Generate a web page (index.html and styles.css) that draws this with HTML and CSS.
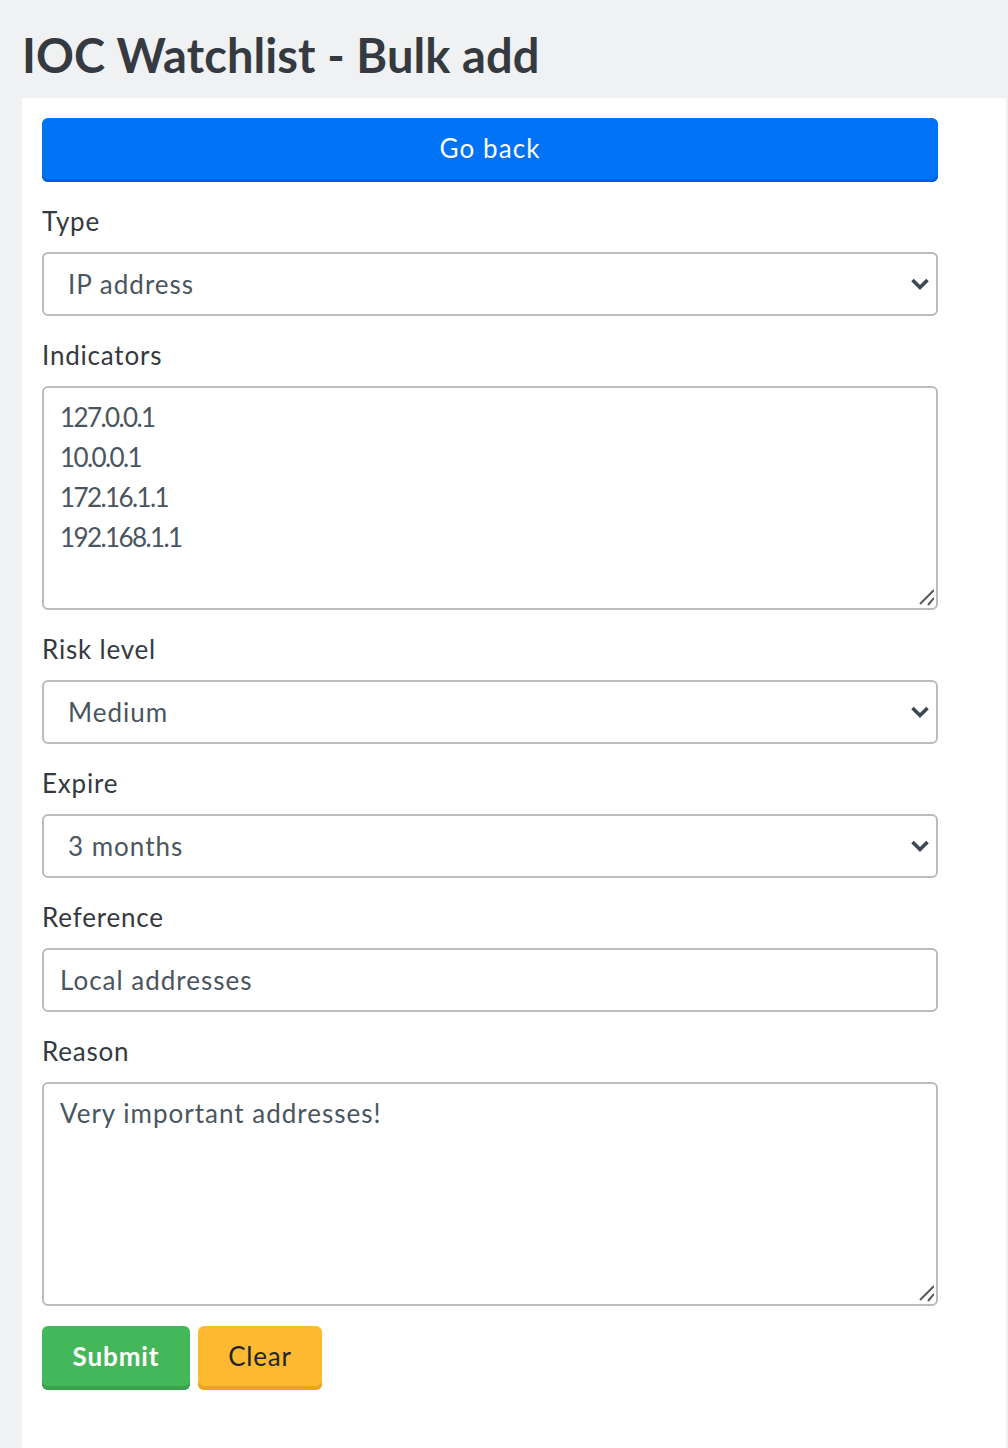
FILE: index.html
```html
<!DOCTYPE html>
<html lang="en">
<head>
<meta charset="utf-8">
<title>IOC Watchlist - Bulk add</title>
<link rel="stylesheet" href="styles.css">
</head>
<body>
<header class="page-header">
  <h1 class="page-title">IOC Watchlist - Bulk add</h1>
</header>
<main class="card">
  <form class="form">
    <button type="button" class="btn btn-primary btn-block">Go back</button>

    <label class="label" for="type">Type</label>
    <div class="field-wrap">
      <select id="type" class="control select">
        <option>IP address</option>
      </select>
      <svg class="chevron" viewBox="0 0 20 14" width="20" height="14"><path d="M2.5 3 L10 10.5 L17.5 3" fill="none" stroke="#3d4852" stroke-width="3.6"/></svg>
    </div>

    <label class="label" for="indicators">Indicators</label>
    <div class="field-wrap">
      <textarea id="indicators" class="control textarea textarea-ips">127.0.0.1
10.0.0.1
172.16.1.1
192.168.1.1</textarea>
      <svg class="grip" viewBox="0 0 18 18" width="18" height="18"><path d="M4 16 L18 2 M12 17 L18 10" fill="none" stroke="#555a5f" stroke-width="2"/></svg>
    </div>

    <label class="label" for="risk">Risk level</label>
    <div class="field-wrap">
      <select id="risk" class="control select">
        <option>Medium</option>
      </select>
      <svg class="chevron" viewBox="0 0 20 14" width="20" height="14"><path d="M2.5 3 L10 10.5 L17.5 3" fill="none" stroke="#3d4852" stroke-width="3.6"/></svg>
    </div>

    <label class="label" for="expire">Expire</label>
    <div class="field-wrap">
      <select id="expire" class="control select">
        <option>3 months</option>
      </select>
      <svg class="chevron" viewBox="0 0 20 14" width="20" height="14"><path d="M2.5 3 L10 10.5 L17.5 3" fill="none" stroke="#3d4852" stroke-width="3.6"/></svg>
    </div>

    <label class="label" for="reference">Reference</label>
    <input id="reference" class="control input" type="text" value="Local addresses">

    <label class="label" for="reason">Reason</label>
    <div class="field-wrap">
      <textarea id="reason" class="control textarea">Very important addresses!</textarea>
      <svg class="grip" viewBox="0 0 18 18" width="18" height="18"><path d="M4 16 L18 2 M12 17 L18 10" fill="none" stroke="#555a5f" stroke-width="2"/></svg>
    </div>

    <div class="actions">
      <button type="submit" class="btn btn-success">Submit</button>
      <button type="reset" class="btn btn-warning">Clear</button>
    </div>
  </form>
</main>
</body>
</html>
```
FILE: styles.css
```css
* { box-sizing: border-box; }

html, body {
  margin: 0;
  padding: 0;
}

body {
  background: #f0f1f3;
  font-family: Lato, "Open Sans", Arial, sans-serif;
  color: #343a40;
}

.page-header {
  height: 98px;
  padding: 0 0 0 22px;
}

.page-title {
  margin: 0;
  padding-top: 27px;
  font-size: 47px;
  line-height: 56px;
  font-weight: 700;
  color: #343a40;
  letter-spacing: 0.1px;
}

.card {
  background: #ffffff;
  margin: 0 2px 0 22px;
  padding: 20px 20px 60px;
  min-height: 1400px;
}

.form {
  width: 896px;
  display: flex;
  flex-direction: column;
}

.btn {
  font-family: inherit;
  font-size: 26px;
  letter-spacing: 1.1px;
  height: 64px;
  border: none;
  border-radius: 6px;
  cursor: pointer;
  padding: 0 0 4px;
}

.btn-block {
  width: 100%;
}

.btn-primary {
  background: #0072f6;
  color: #ffffff;
  box-shadow: inset 0 -3px 0 #0061d6;
}

.btn-success {
  width: 148px;
  background: #44b75a;
  color: #ffffff;
  font-weight: 700;
  letter-spacing: 0.9px;
  box-shadow: inset 0 -4px 0 #3aa04d;
}

.btn-warning {
  width: 124px;
  background: #fdb92f;
  color: #212529;
  letter-spacing: 0.8px;
  box-shadow: inset 0 -4px 0 #eba324;
}

.label {
  display: block;
  padding-top: 20px;
  margin-bottom: 12px;
  font-size: 26px;
  line-height: 38px;
  letter-spacing: 0.8px;
  color: #343a40;
}

.field-wrap {
  position: relative;
}

.control {
  display: block;
  width: 100%;
  font-family: inherit;
  font-size: 26px;
  letter-spacing: 1px;
  color: #4a5560;
  background: #ffffff;
  border: 2px solid #bbbbbb;
  border-radius: 6px;
  outline: none;
  margin: 0;
}

.select {
  height: 64px;
  padding: 0 60px 1px 24px;
  appearance: none;
  -webkit-appearance: none;
}

.chevron {
  position: absolute;
  right: 8px;
  top: 25px;
  pointer-events: none;
}

.input {
  height: 64px;
  padding: 0 16px 1px;
}

.textarea {
  height: 224px;
  padding: 9px 16px 7px;
  line-height: 40px;
  resize: none;
}

.textarea-ips {
  letter-spacing: -1.6px;
}

.grip {
  position: absolute;
  right: 4px;
  bottom: 4px;
  pointer-events: none;
}

.actions {
  display: flex;
  gap: 8px;
  margin-top: 20px;
}
```
